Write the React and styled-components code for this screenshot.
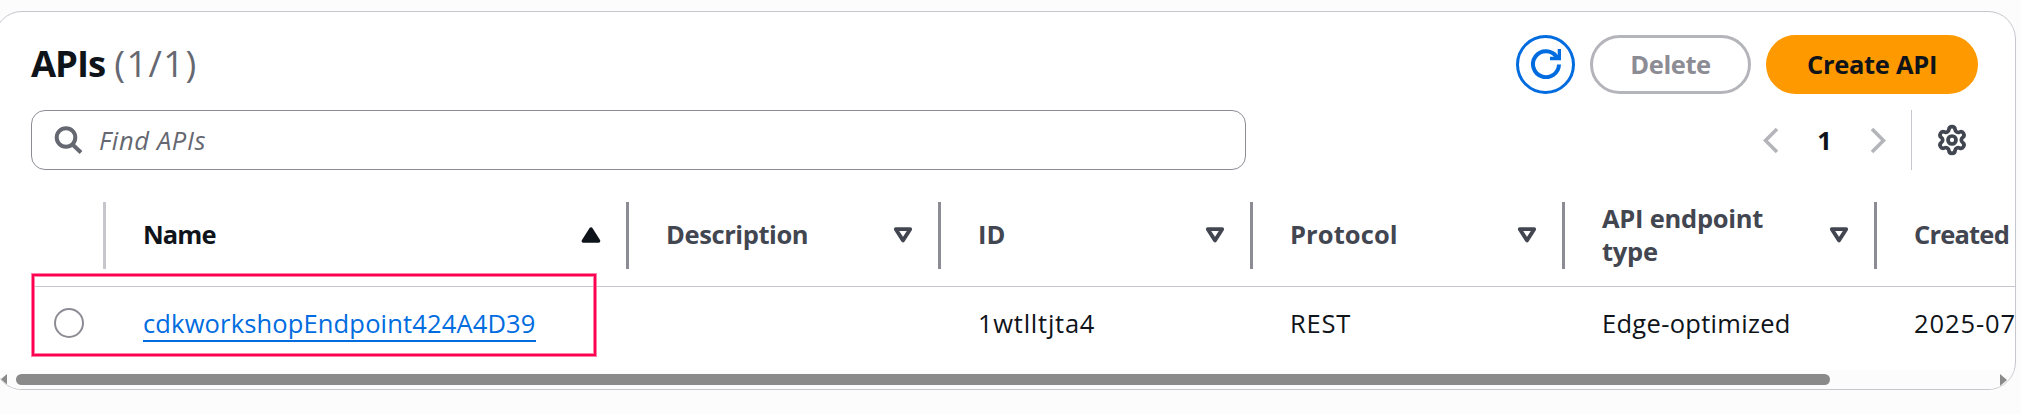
import React from 'react';
import styled, { createGlobalStyle } from 'styled-components';
import { Settings } from 'lucide-react';

const GlobalStyle = createGlobalStyle`
  * { box-sizing: border-box; }
  body {
    margin: 0;
    background: #fcfcfc;
    color: #0f141a;
    font: 440 25.5px/33px "Open Sans", "Noto Sans", sans-serif;
    overflow: hidden;
  }
`;

const Page = styled.main`
  height: 414px;
  padding-top: 11px;
  overflow: hidden;
`;

const Panel = styled.section`
  position: relative;
  width: 2022px;
  height: 379px;
  margin-left: -6px;
  display: flex;
  flex-direction: column;
  background: #fff;
  border: 1px solid #c6c6cd;
  border-radius: 28px;
  overflow: hidden;
`;

const Bar = styled.div`
  display: flex;
  align-items: center;
  justify-content: space-between;
  height: 60px;
  padding: 0 37px 0 36px;
`;

const TitleBar = styled(Bar)`
  height: 59px;
  margin: 23px 0 16px;
`;

const Title = styled.h1`
  margin: 0;
  padding-bottom: 4px;
  font-size: 36.5px;
  line-height: 44px;
  font-weight: 700;
  letter-spacing: -1.1px;
`;

const Counter = styled.span`
  margin-left: 1px;
  font-weight: 440;
  letter-spacing: 1.3px;
  color: #656871;
`;

const Actions = styled.div`
  display: flex;
  gap: 15px;
`;

const Button = styled.button`
  display: flex;
  align-items: center;
  justify-content: center;
  width: ${(p) => p.$width}px;
  height: 59px;
  padding: 0 0 1px;
  border: 3px solid ${(p) => p.$border};
  border-radius: 30px;
  background: ${(p) => p.$fill || '#fff'};
  color: ${(p) => p.$color};
  font: 700 25.5px/33px "Open Sans", sans-serif;
  letter-spacing: ${(p) => p.$tracking || 0}px;
`;

const SearchField = styled.label`
  display: flex;
  align-items: center;
  width: 1215px;
  height: 60px;
  padding: 0 23px 0 22px;
  gap: 16px;
  border: 1px solid #8c8c94;
  border-radius: 14px;
  color: #656871;
  font-style: italic;
  letter-spacing: 0.65px;
`;

const Pager = styled.div`
  display: flex;
  align-items: center;
  height: 60px;
`;

const PageNumber = styled.span`
  width: 91px;
  text-align: center;
  font-weight: 700;
`;

const Preferences = styled.div`
  display: flex;
  align-items: center;
  justify-content: flex-end;
  width: 67px;
  height: 60px;
  margin-left: 25px;
  padding-right: 10px;
  border-left: 1px solid #c6c6cd;
`;

const HeaderRow = styled.div`
  display: grid;
  grid-template-columns: 75px 523px repeat(5, 312px);
  align-items: start;
  flex: none;
  height: 85px;
  margin: 32px 0 0 36px;
  border-bottom: 1px solid #c6c6cd;
`;

const HeaderCell = styled.div`
  display: flex;
  align-items: center;
  justify-content: space-between;
  height: 67px;
  padding: 0 25px 1px 37px;
  border-right: 3px solid ${(p) => (p.$light ? '#c6c6cd' : '#8c8c94')};
  color: ${(p) => (p.$active ? '#0f141a' : '#424650')};
  font-weight: 700;
  letter-spacing: ${(p) => p.$tracking || 0}px;
`;

const HeaderLabel = styled.span`
  max-width: 180px;
  padding-bottom: ${(p) => (p.$wraps ? 0 : 2)}px;
`;

const Row = styled.div`
  display: grid;
  grid-template-columns: 111px 523px repeat(5, 312px);
  align-items: center;
  flex: none;
  height: 73px;
  margin-bottom: 10px;
`;

const Cell = styled.div`
  padding-left: 37px;
  white-space: nowrap;
  letter-spacing: ${(p) => p.$tracking || 0}px;
`;

const Link = styled.a`
  display: inline-block;
  height: 35px;
  margin-top: 2px;
  border-bottom: 2px solid #006ce0;
  color: #006ce0;
`;

const Radio = styled.span`
  display: block;
  width: 30px;
  height: 30px;
  margin: 0 0 1px 59px;
  border: 2px solid #8c8c94;
  border-radius: 50%;
`;

const Scrollbar = styled.div`
  display: flex;
  align-items: center;
  flex: 1;
  background: #fcfcfc;
  padding: 0 8px 0 5px;
`;

const Thumb = styled.div`
  width: 1814px;
  height: 11px;
  margin: 0 170px 0 9px;
  border-radius: 6px;
  background: #8a8a8a;
`;

const Highlight = styled.div`
  position: absolute;
  top: 262px;
  left: 37px;
  width: 564px;
  height: 82px;
  border: 2px solid #ff0050;
  box-shadow: 0 0 0 1px #ff80a8, inset 0 0 0 1px #ff80a8;
`;

const RefreshIcon = () => (
  <svg width="30" height="30" viewBox="0 0 30 30" fill="none" stroke="#006ce0" strokeWidth="4">
    <path d="M28 15.5A13 13 0 1 1 25.6 7.6L27.5 9.5" />
    <path d="M28.4 0V9.5H19" strokeWidth="3.4" />
  </svg>
);

const SearchIcon = () => (
  <svg width="29" height="29" viewBox="0 0 29 29" fill="none" stroke="#656871" strokeWidth="4">
    <circle cx="12" cy="11.5" r="9.3" />
    <path d="M18 18l9 8.5" />
  </svg>
);

const Chevron = ({ next }) => (
  <svg width="16" height="27" viewBox="0 0 16 27" fill="none" stroke="#b4b4bb" strokeWidth="3.6">
    <path d={next ? 'M2 2l11.5 11.5L2 25' : 'M14 2L2.5 13.5 14 25'} />
  </svg>
);

const SortIcon = ({ ascending }) => (
  <svg width="20" height="17" viewBox="0 0 20 17" fill={ascending ? '#0f141a' : 'none'} stroke={ascending ? '#0f141a' : '#424650'} strokeWidth={ascending ? 3.4 : 3.8} strokeLinejoin="round">
    <path d={ascending ? 'M10 2L2.4 14H17.6Z' : 'M10 13.4L2.8 2.2H17.2Z'} />
  </svg>
);

const ScrollArrow = ({ right }) => (
  <svg width="7" height="12" viewBox="0 0 7 12" fill="#8a8a8a">
    <path d={right ? 'M0 0L7 6L0 12Z' : 'M7 0L0 6L7 12Z'} />
  </svg>
);

const headers = [
  { label: 'Name', tracking: -0.9, active: true },
  { label: 'Description', tracking: -0.4 },
  { label: 'ID', tracking: 0 },
  { label: 'Protocol', tracking: 0.1 },
  { label: 'API endpoint type', tracking: -0.25, wraps: true },
];

export default function App() {
  return (
    <Page>
      <GlobalStyle />
      <Panel>
        <TitleBar>
          <Title>APIs <Counter>(1/1)</Counter></Title>
          <Actions>
            <Button $width={59} $border="#006ce0" aria-label="Refresh"><RefreshIcon /></Button>
            <Button $width={161} $border="#b4b4bb" $color="#8c8c94" $tracking={-0.4}>Delete</Button>
            <Button $width={212} $border="#ff9900" $fill="#ff9900" $color="#0f141a" $tracking={-0.3}>Create API</Button>
          </Actions>
        </TitleBar>
        <Bar>
          <SearchField><SearchIcon />Find APIs</SearchField>
          <Pager>
            <Chevron />
            <PageNumber>1</PageNumber>
            <Chevron next />
            <Preferences><Settings size={32} strokeWidth={2.8} color="#424650" /></Preferences>
          </Pager>
        </Bar>
        <HeaderRow>
          <HeaderCell $light />
          {headers.map((h) => (
            <HeaderCell key={h.label} $active={h.active} $tracking={h.tracking}>
              <HeaderLabel $wraps={h.wraps}>{h.label}</HeaderLabel>
              <SortIcon ascending={h.active} />
            </HeaderCell>
          ))}
          <HeaderCell $tracking={-0.8}><HeaderLabel>Created</HeaderLabel></HeaderCell>
        </HeaderRow>
        <Row>
          <Radio />
          <Cell $tracking={0.15}><Link>cdkworkshopEndpoint424A4D39</Link></Cell>
          <Cell />
          <Cell $tracking={0.75}>1wtlltjta4</Cell>
          <Cell $tracking={0.8}>REST</Cell>
          <Cell $tracking={0.3}>Edge-optimized</Cell>
          <Cell $tracking={0.9}>2025-07</Cell>
        </Row>
        <Scrollbar>
          <ScrollArrow />
          <Thumb />
          <ScrollArrow right />
        </Scrollbar>
        <Highlight />
      </Panel>
    </Page>
  );
}
